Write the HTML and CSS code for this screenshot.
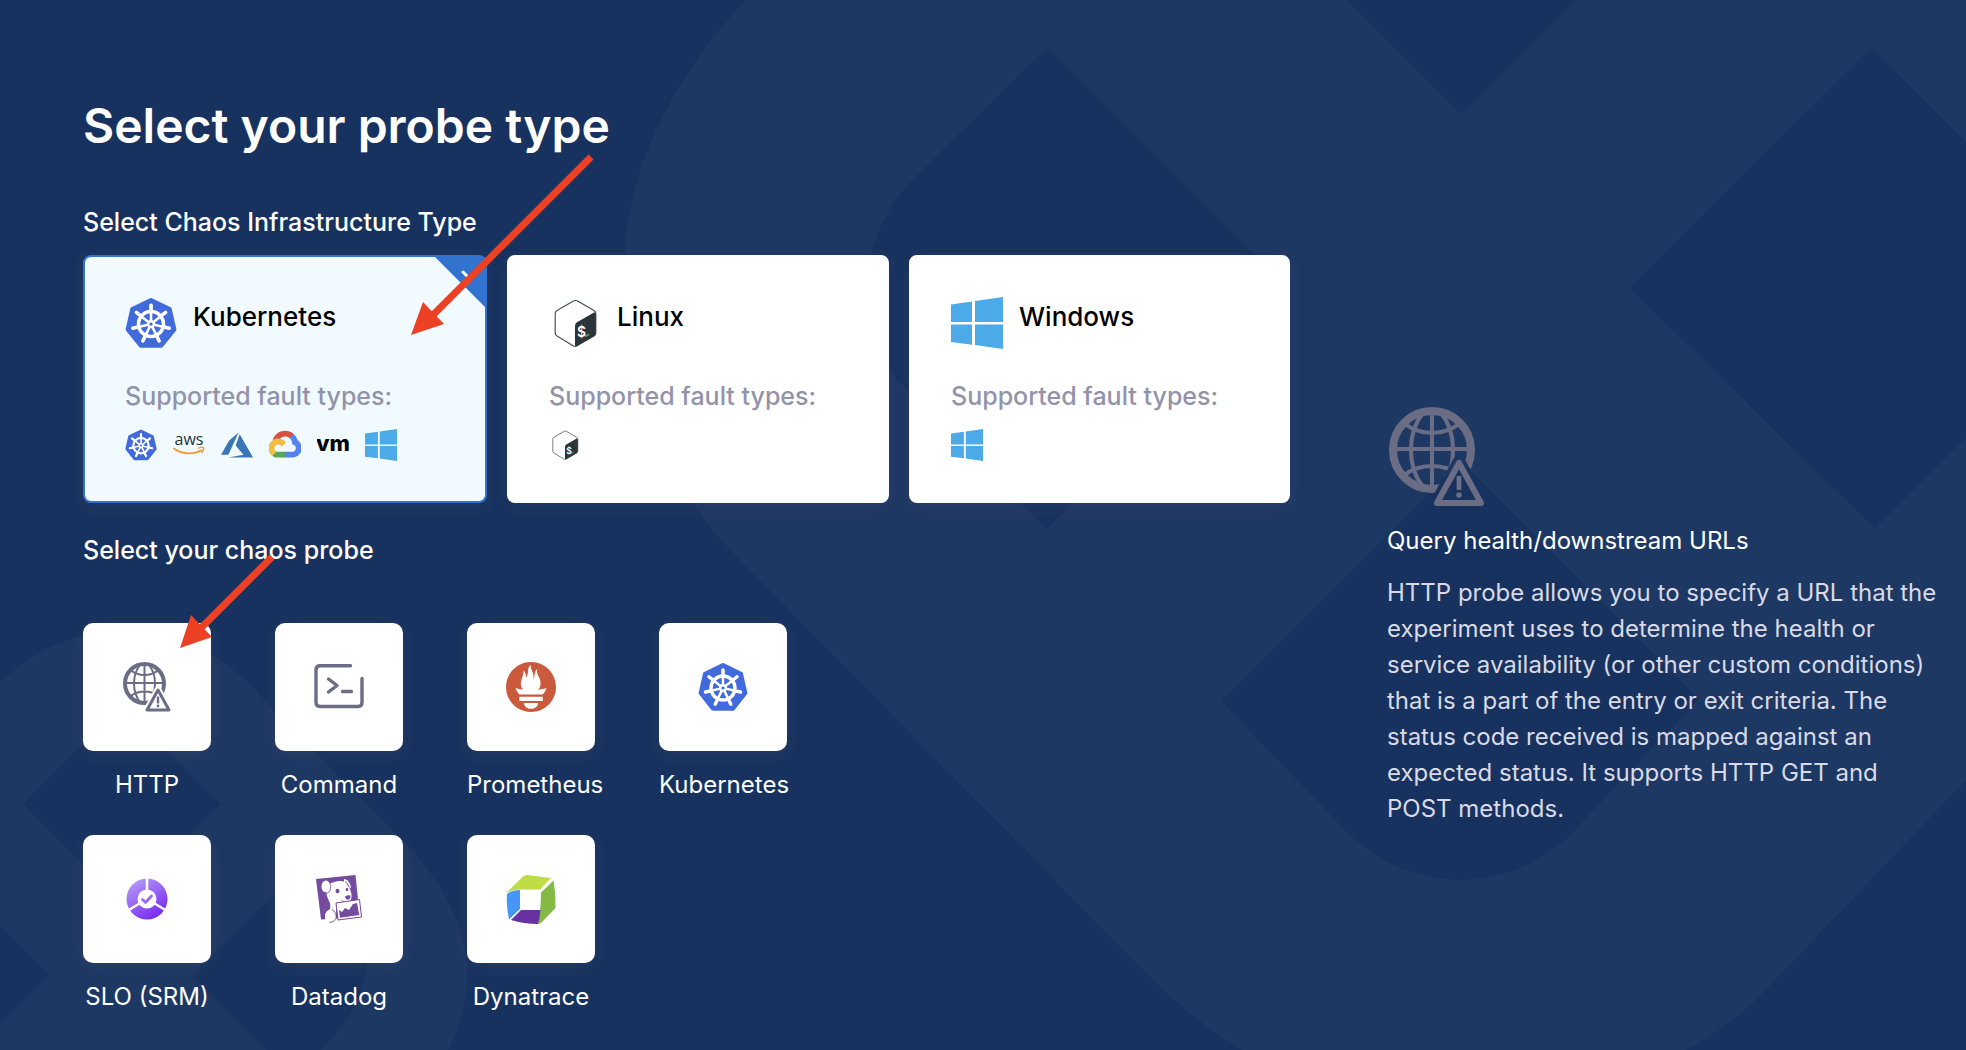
FILE: index.html
```html
<!DOCTYPE html>
<html lang="en">
<head>
<meta charset="utf-8">
<meta name="viewport" content="width=device-width, initial-scale=1">
<title>Select your probe type</title>
<link rel="stylesheet" href="styles.css">
</head>
<body>
<svg class="sprite" aria-hidden="true">
  <defs>
    <g id="spoke"><path d="M25 22V8" stroke="#fff" stroke-width="2.500" stroke-linecap="round"/><path d="M25 12V8" stroke="#fff" stroke-width="3.400" stroke-linecap="round"/></g>
    <linearGradient id="slo-fill" x1="0" y1="0" x2="0.6" y2="1"><stop offset="0" stop-color="#bba6fb"/><stop offset="1" stop-color="#7a2df0"/></linearGradient>
    <mask id="globe-cut" maskUnits="userSpaceOnUse" x="0" y="0" width="48" height="50">
      <path fill="#fff" d="M0 0h48v50H0z"/>
      <path d="M35 28L24 48h22z" fill="#000" stroke="#000" stroke-width="7" stroke-linejoin="round"/>
    </mask>
  </defs>
  <symbol id="kubernetes" viewBox="0 0 50 50">
    <path d="M25 3L43 11.700L47.400 31.100L35 46.700H15L2.600 31.100L7 11.700z" fill="#416bdd" stroke="#416bdd" stroke-width="4" stroke-linejoin="round"/>
    <circle cx="25" cy="26" r="12" fill="none" stroke="#fff" stroke-width="3.400"/>
    <use href="#spoke"/>
    <use href="#spoke" transform="rotate(51.430 25 26)"/>
    <use href="#spoke" transform="rotate(102.860 25 26)"/>
    <use href="#spoke" transform="rotate(154.290 25 26)"/>
    <use href="#spoke" transform="rotate(205.710 25 26)"/>
    <use href="#spoke" transform="rotate(257.140 25 26)"/>
    <use href="#spoke" transform="rotate(308.570 25 26)"/>
    <circle cx="25" cy="26" r="4" fill="#fff"/><circle cx="25" cy="26" r="1.600" fill="#416bdd"/>
  </symbol>
  <symbol id="azure" viewBox="0 0 24 24"><path fill="#3a76b5" d="M5.483 21.300H24L14.025 4.013l-3.038 8.347 5.836 6.938L5.483 21.300zM13.230 2.700L6.105 8.677 0 19.253h5.505v.014L13.230 2.700z"/></symbol>
  <symbol id="gcp" viewBox="8 8 112 112">
    <path fill="#d85140" d="M80.600 40.300h.4l-.2-.2 14-14v-.3c-11.800-10.400-28.100-14-43.200-9.500C36.500 20.800 24.900 32.800 20.700 48c.2-.1.5-.2.8-.2 5.200-3.400 11.400-5.400 17.900-5.400 2.200 0 4.300.2 6.400.6.1-.1.2-.1.3-.1 9-9.900 24.200-11.100 34.600-2.600h-.1z"/>
    <path fill="#5383ec" d="M108.100 47.800c-2.300-8.500-7.100-16.200-13.800-22.100L80 39.900c6 4.900 9.500 12.300 9.300 20v2.500c16.900 0 16.900 25.200 0 25.200H63.900v20h-.1l.1.2h25.400c14.600.1 27.500-9.300 31.800-23.100 4.300-13.800-1-28.800-13-36.900z"/>
    <path fill="#58a55c" d="M39 107.900h26.300V87.700H39c-1.900 0-3.700-.4-5.400-1.100l-15.200 14.600v.2c6 4.300 13.200 6.600 20.700 6.600z"/>
    <path fill="#f1bd42" d="M40.200 41.900c-14.900.1-28.100 9.300-32.900 22.800-4.800 13.600 0 28.500 11.800 37.300l15.600-14.900c-8.600-3.700-10.600-14.500-4-20.800 6.600-6.400 17.800-4.400 21.700 3.800L68 55.200C61.400 46.900 51.100 42 40.200 42.100z"/>
  </symbol>
  <symbol id="windows" viewBox="0 0 52 52"><path fill="#4daae9" d="M0 7.500L21 4.500V25H0zM24 4L52 0V25H24zM0 27.500H21V47.700L0 45zM24 27.500H52V52L24 48z"/></symbol>
  <symbol id="bash" viewBox="0 0 52 52">
    <path d="M26.500 3.500Q25 3.500 24 4.200L8 13.500Q6.200 14.700 6.200 16.500V36Q6.200 38 8 39L24 48.700Q26 50 28 48.700L45 39Q46.800 38 46.800 36V16.500Q46.800 14.700 45 13.500L29 4.200Q28 3.500 26.500 3.500z" fill="#fff" stroke="#4a5256" stroke-width="1.200"/>
    <path d="M26 29Q26 26.500 28 25.300L45 15.500Q46.800 15 46.800 17V36Q46.800 38 45 39L28 49Q26 50 26 48z" fill="#2b3438"/>
    <path d="M36 39.500l4-2.200" stroke="#4fa74f" stroke-width="1.600"/>
  </symbol>
  <symbol id="globe" viewBox="0 0 48 50">
    <g mask="url(#globe-cut)" fill="none" stroke="#6b6d85" stroke-width="2">
      <circle cx="21.500" cy="21.500" r="19.500" stroke-width="4"/>
      <path d="M21.500 3v37M2 21h39M7 7.500q6 5.500 14.500 5.500T36 7.500M7 34.500q6-5 14.500-5T36 34.500"/>
      <path d="M17 3C9 13 9 30 17 40M26 3c8 10 8 27 0 37"/>
    </g>
    <path d="M35 28L24 48h22z" fill="none" stroke="#6b6d85" stroke-width="3" stroke-linejoin="round"/>
    <path d="M33.800 34.500h2.400v7h-2.400z" fill="#6b6d85"/><circle cx="35" cy="44" r="1.400" fill="#6b6d85"/>
  </symbol>
  <symbol id="command" viewBox="0 0 50 50"><g fill="none" stroke="#6b6d85" stroke-width="3.400" stroke-linecap="round" stroke-linejoin="round"><path d="M36.500 3.800H6Q2 3.800 2 8V40.500Q2 44.500 6 44.500H44Q48 44.500 48 40.500V16.500"/><path d="M14.500 17L23 23.500L14.500 30M28.500 29.500H37.500"/></g></symbol>
  <symbol id="prometheus" viewBox="0 0 24 24"><path fill="#cb593b" d="M12 0C5.373 0 0 5.372 0 12c0 6.627 5.373 12 12 12s12-5.373 12-12c0-6.628-5.373-12-12-12zm0 22.460c-1.885 0-3.414-1.260-3.414-2.814h6.828c0 1.553-1.528 2.813-3.414 2.813zm5.640-3.745H6.360v-2.046h11.280v2.046zm-.04-3.098H6.391c-.037-.043-.075-.086-.111-.13-1.155-1.401-1.427-2.133-1.690-2.879-.005-.025 1.400.287 2.395.511 0 0 .513.119 1.262.255-.72-.843-1.147-1.915-1.147-3.010 0-2.406 1.845-4.508 1.180-6.207.648.053 1.340 1.367 1.387 3.422.689-.951.977-2.690.977-3.755 0-1.103.727-2.385 1.454-2.429-.648 1.069.168 1.984.894 4.256.272.854.237 2.290.447 3.201.07-1.892.395-4.652 1.595-5.605-.529 1.200.079 2.702.494 3.424.671 1.164 1.078 2.047 1.078 3.716a4.642 4.642 0 0 1-1.110 2.996c.792-.149 1.340-.283 1.340-.283l2.573-.502s-.374 1.538-1.810 3.019z"/></symbol>
  <symbol id="slo" viewBox="0 0 50 50">
    <circle cx="25" cy="25" r="20.500" fill="url(#slo-fill)"/>
    <path d="M25 25V2M25 25L5 37M25 25l20 12" stroke="#fff" stroke-width="2.600"/>
    <circle cx="25" cy="25" r="9.500" fill="#fff"/>
    <path d="M20.500 25.500l3 3 6-6.500" fill="none" stroke="#9a6bf6" stroke-width="2.800" stroke-linecap="round" stroke-linejoin="round"/>
  </symbol>
  <symbol id="datadog" viewBox="0 0 50 50">
    <path d="M2 5L41.500 1L44 25L46 43L7 45.500z" fill="#754ba0"/>
    <path d="M12 13Q14 9 19 8.500Q26 6 31 8Q36 8 35.500 14Q38 19 37.500 23Q37 28 33 28.500Q29 30 27 28L22 29V46H11Q11 39 16 35Q17 30 15 27Q12 22 12 13z" fill="#fff"/>
    <ellipse cx="12" cy="12.500" rx="4.500" ry="6" fill="#fff"/>
    <path d="M15 7q3 4 1 10-2 3-5 2" fill="none" stroke="#754ba0" stroke-width=".8"/>
    <path d="M30 5Q34 5 36.500 11L37 14Q33 13 30 8z" fill="#fff"/>
    <path d="M31 7.500Q34 9.500 35 13" fill="none" stroke="#754ba0" stroke-width="1"/>
    <ellipse cx="23.500" cy="17" rx="2" ry="2.200" fill="#754ba0"/><ellipse cx="33" cy="15.500" rx="1.300" ry="1.700" fill="#754ba0"/>
    <path d="M31 22.500q3-2 5.500-.8-.3 4-2.500 4T31 22.500zM27 26q2 3 6 2.300" fill="#754ba0"/>
    <path d="M22 29L45.500 25.500L47.500 43L24 46z" fill="#fff" stroke="#754ba0" stroke-width="1"/>
    <path d="M25 36l3 2 3-4 4 2 4-6 4-1L45.300 41L26 43.800z" fill="#754ba0"/>
    <ellipse cx="16.500" cy="42" rx="5.500" ry="6.500" fill="#fff"/>
    <path d="M18 35.500q5 3 4 9-2 4-6.500 4" fill="none" stroke="#754ba0" stroke-width=".9"/>
  </symbol>
  <symbol id="dynatrace" viewBox="0 0 50 50">
    <path fill="#bedc45" d="M1 18L17 2.500Q18.500 1 21 1L45 4L34 15.500H14Q6 15.500 1 19z"/>
    <path fill="#4596f7" d="M1 20Q6 16 14 16V35L3 45.500Q0 32 1 20z"/>
    <path fill="#84ba44" d="M47.500 6.500Q50 20 49.500 34L35 49Q33.500 50 32 50Q35 35 35 18.500z"/>
    <path fill="#6831a2" d="M5 46L15 36H34.500Q34 44 32 50Q18 50 5 46z"/>
  </symbol>
</svg>

<svg class="backdrop" viewBox="0 0 1966 1050" preserveAspectRatio="xMinYMin slice" aria-hidden="true">
  <path fill="#1e3864" fill-rule="evenodd" d="M746 0C665 85 624 180 624 272C624 385 665 485 739 559L1157 984Q1198 1024 1243 1050H1686Q1725 1030 1758 998L1966 780V438L1875 529L1630 288L1871 48L1966 142V0H1575L1461 114L1347 0zM1047 48L1287 288L1047 529L892 375C850 300 865 225 918 174zM1461 461L1699 699L1571 834C1510 895 1412 895 1349 834L1221 701z"/>
  <path fill="#1e3864" fill-rule="evenodd" d="M0 683C75 610 190 605 275 712L395 833C470 905 485 980 448 1050H320C375 1005 380 925 345 892Q318 865 275 893L192 975L267 1050H0V1025L50 975L0 925zM122 705L221 804L122 903L23 804z"/>
</svg>

<main class="page">
  <div class="picker">
    <h1 class="title">Select your probe type</h1>

    <section>
      <h2 class="heading heading-infra">Select Chaos Infrastructure Type</h2>
      <div class="infra-list">
        <div class="infra-item">
          <button class="infra-card selected" type="button" aria-pressed="true">
            <span class="infra-head"><svg class="icon-large" aria-hidden="true"><use href="#kubernetes"/></svg><span class="infra-name">Kubernetes</span></span>
            <span class="infra-caption">Supported fault types:</span>
            <span class="fault-list">
              <svg class="icon-small" aria-hidden="true"><use href="#kubernetes"/></svg>
              <svg class="icon-small" viewBox="0 0 32 32" role="img" aria-label="AWS">
                <text class="logo-aws" x="16" y="16" text-anchor="middle">aws</text>
                <path d="M1 19.500c7 5.600 19 6.600 27.500 1.800" fill="none" stroke="#ef9b34" stroke-width="1.800" stroke-linecap="round"/>
                <path d="M25.500 19.200c2-1.400 4.400-1.300 5-.7.500.8-.1 3.400-1.700 5" fill="none" stroke="#ef9b34" stroke-width="1.400" stroke-linecap="round"/>
              </svg>
              <svg class="icon-small" aria-hidden="true"><use href="#azure"/></svg>
              <svg class="icon-small" aria-hidden="true"><use href="#gcp"/></svg>
              <svg class="icon-small" viewBox="0 0 32 32" role="img" aria-label="VMware"><text class="logo-vm" x="16" y="22" text-anchor="middle">vm</text></svg>
              <svg class="icon-small" aria-hidden="true"><use href="#windows"/></svg>
            </span>
            <svg class="corner" viewBox="0 0 50 50" aria-hidden="true"><path fill="#3273d0" d="M0 0H50V50z"/><path d="M28 15l7 7 12-13" fill="none" stroke="#fff" stroke-width="3" stroke-linecap="round"/></svg>
          </button>
          <svg class="arrow arrow-infra" viewBox="0 0 184 184" aria-hidden="true"><path d="M181 3L20 164" stroke="#ec4125" stroke-width="7"/><path fill="#ec4125" d="M1 181L13 148L34 170z"/></svg>
        </div>
        <div class="infra-item">
          <button class="infra-card" type="button" aria-pressed="false">
            <span class="infra-head"><svg class="icon-large" viewBox="0 0 52 52" aria-hidden="true"><use href="#bash"/><text class="logo-prompt" x="28" y="40">$</text></svg><span class="infra-name">Linux</span></span>
            <span class="infra-caption">Supported fault types:</span>
            <span class="fault-list"><svg class="icon-small" viewBox="0 0 52 52" aria-hidden="true"><use href="#bash"/><text class="logo-prompt" x="28" y="40">$</text></svg></span>
          </button>
        </div>
        <div class="infra-item">
          <button class="infra-card" type="button" aria-pressed="false">
            <span class="infra-head"><svg class="icon-large" aria-hidden="true"><use href="#windows"/></svg><span class="infra-name">Windows</span></span>
            <span class="infra-caption">Supported fault types:</span>
            <span class="fault-list"><svg class="icon-small" aria-hidden="true"><use href="#windows"/></svg></span>
          </button>
        </div>
      </div>
    </section>

    <section>
      <h2 class="heading heading-probe">Select your chaos probe</h2>
      <div class="probe-list">
        <div class="probe-item">
          <button class="probe" type="button"><span class="probe-tile"><svg class="icon-probe" aria-hidden="true"><use href="#globe"/></svg></span><span class="probe-name">HTTP</span></button>
          <svg class="arrow arrow-probe" viewBox="0 0 96 96" aria-hidden="true"><path d="M93 3L18 78" stroke="#ec4125" stroke-width="7"/><path fill="#ec4125" d="M1 94L12 61L33 83z"/></svg>
        </div>
        <div class="probe-item"><button class="probe" type="button"><span class="probe-tile"><svg class="icon-probe" aria-hidden="true"><use href="#command"/></svg></span><span class="probe-name">Command</span></button></div>
        <div class="probe-item"><button class="probe" type="button"><span class="probe-tile"><svg class="icon-probe" aria-hidden="true"><use href="#prometheus"/></svg></span><span class="probe-name">Prometheus</span></button></div>
        <div class="probe-item"><button class="probe" type="button"><span class="probe-tile"><svg class="icon-probe" aria-hidden="true"><use href="#kubernetes"/></svg></span><span class="probe-name">Kubernetes</span></button></div>
        <div class="probe-item"><button class="probe" type="button"><span class="probe-tile"><svg class="icon-probe" aria-hidden="true"><use href="#slo"/></svg></span><span class="probe-name">SLO (SRM)</span></button></div>
        <div class="probe-item"><button class="probe" type="button"><span class="probe-tile"><svg class="icon-probe" aria-hidden="true"><use href="#datadog"/></svg></span><span class="probe-name">Datadog</span></button></div>
        <div class="probe-item"><button class="probe" type="button"><span class="probe-tile"><svg class="icon-probe" aria-hidden="true"><use href="#dynatrace"/></svg></span><span class="probe-name">Dynatrace</span></button></div>
      </div>
    </section>
  </div>

  <aside class="details">
    <svg class="details-icon" aria-hidden="true"><use href="#globe"/></svg>
    <h2 class="details-title">Query health/downstream URLs</h2>
    <p class="details-text">HTTP probe allows you to specify a URL that the experiment uses to determine the health or service availability (or other custom conditions) that is a part of the entry or exit criteria. The status code received is mapped against an expected status. It supports HTTP GET and POST methods.</p>
  </aside>
</main>
</body>
</html>
```
FILE: styles.css
```css
* {
  box-sizing: border-box;
}

body {
  position: relative;
  min-height: 100vh;
  margin: 0;
  background: #18325f;
  color: #fff;
  font-family: Inter, "Liberation Sans", sans-serif;
  font-size: 24px;
  line-height: 36px;
}

h1,
h2,
p {
  margin: 0;
}

button {
  border: 0;
  padding: 0;
  background: none;
  color: inherit;
  font: inherit;
  cursor: pointer;
}

svg {
  display: block;
}

.sprite {
  position: absolute;
  width: 0;
  height: 0;
}

.backdrop {
  position: absolute;
  inset: 0;
  width: 100%;
  height: 100%;
}

.page {
  position: relative;
  display: grid;
  grid-template-columns: minmax(0, 1207fr) minmax(0, 560fr);
  column-gap: 97px;
  padding: 96px 19px 24px 83px;
}

.title {
  font-size: 48px;
  font-weight: 600;
  line-height: 60px;
}

.heading {
  font-size: 25px;
  font-weight: 500;
  line-height: 32px;
}

.heading-infra {
  margin: 50px 0 17px;
}

.heading-probe {
  margin: 31px 0 57px;
}

.infra-list {
  display: grid;
  grid-template-columns: 404fr 382fr 381fr;
  gap: 20px;
}

.infra-item,
.probe-item {
  position: relative;
}

.infra-card {
  position: relative;
  display: flex;
  flex-direction: column;
  width: 100%;
  padding: 40px;
  border: 2px solid #fff;
  border-radius: 8px;
  background: #fff;
  box-shadow: 0 4px 16px rgba(96, 97, 112, 0.16);
  text-align: left;
}

.infra-card.selected {
  border-color: #3273d0;
  background: #f1fbff;
}

.corner {
  position: absolute;
  top: 0;
  right: 0;
  width: 50px;
  height: 50px;
}

.infra-head {
  display: flex;
  align-items: flex-start;
  gap: 16px;
}

.icon-large {
  width: 52px;
  height: 52px;
}

.infra-name {
  color: #000;
  font-size: 26px;
  font-weight: 500;
  line-height: 40px;
}

.infra-caption {
  margin: 29px 0 15px;
  color: #9293ab;
  font-size: 25px;
  font-weight: 500;
}

.fault-list {
  display: flex;
  gap: 16px;
}

.icon-small {
  width: 32px;
  height: 32px;
}

.logo-aws {
  fill: #252f3e;
  font-family: "Open Sans", "Noto Sans", sans-serif;
  font-size: 16px;
  font-weight: 500;
}

.logo-vm {
  fill: #000;
  font-size: 22px;
  font-weight: 800;
}

.logo-prompt {
  fill: #fff;
  font-size: 14px;
  font-weight: 600;
}

.probe-list {
  display: grid;
  grid-template-columns: repeat(4, 128px);
  gap: 32px 64px;
}

.probe {
  display: block;
  width: 128px;
}

.probe-tile {
  display: grid;
  place-items: center;
  height: 128px;
  margin-bottom: 16px;
  border-radius: 10px;
  background: #fff;
  box-shadow: 0 4px 16px rgba(96, 97, 112, 0.16);
}

.icon-probe {
  width: 50px;
  height: 50px;
}

.probe-name {
  display: block;
  white-space: nowrap;
}

.arrow {
  position: absolute;
  z-index: 1;
  pointer-events: none;
}

.arrow-infra {
  top: -101px;
  left: 327px;
  width: 184px;
  height: 184px;
}

.arrow-probe {
  top: -69px;
  left: 96px;
  width: 96px;
  height: 96px;
}

.details {
  display: flex;
  flex-direction: column;
  gap: 16px;
  padding-top: 311px;
}

.details-icon {
  width: 100px;
  height: 100px;
}

.details-title {
  font-size: 24px;
  font-weight: 400;
}

.details-text {
  color: #d9dae5;
}
```
